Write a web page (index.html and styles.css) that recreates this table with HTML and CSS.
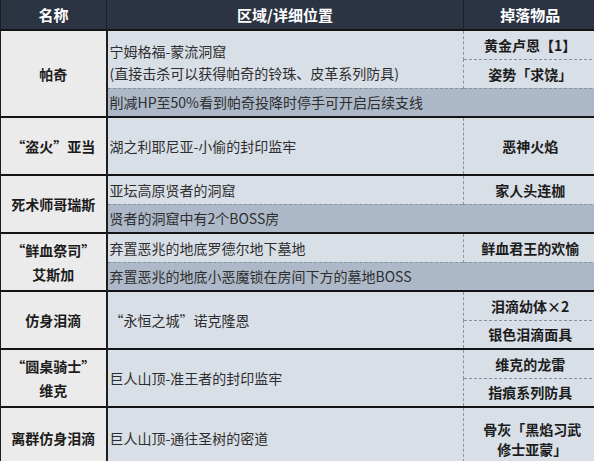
FILE: index.html
```html
<!DOCTYPE html>
<html lang="zh-CN">
<head>
<meta charset="utf-8">
<title>掉落物品</title>
<link rel="stylesheet" href="styles.css">
</head>
<body>
<table class="boss-table">
  <colgroup>
    <col class="c-name">
    <col class="c-loc">
    <col class="c-drop">
  </colgroup>
  <thead>
    <tr class="head">
      <th>名称</th>
      <th>区域/详细位置</th>
      <th>掉落物品</th>
    </tr>
  </thead>
  <tbody class="group">
    <tr class="sub">
      <td class="name" rowspan="3">帕奇</td>
      <td class="loc two" rowspan="2">宁姆格福-蒙流洞窟<br>(直接击杀可以获得帕奇的铃珠、皮革系列防具)</td>
      <td class="drop">黄金卢恩【1】</td>
    </tr>
    <tr class="sub">
      <td class="drop dash-top">姿势「求饶」</td>
    </tr>
    <tr class="sub">
      <td class="note" colspan="2">削减HP至50%看到帕奇投降时停手可开启后续支线</td>
    </tr>
  </tbody>
  <tbody class="group">
    <tr class="full">
      <td class="name">“盗火”亚当</td>
      <td class="loc">湖之利耶尼亚-小偷的封印监牢</td>
      <td class="drop">恶神火焰</td>
    </tr>
  </tbody>
  <tbody class="group">
    <tr class="sub">
      <td class="name" rowspan="2">死术师哥瑞斯</td>
      <td class="loc">亚坛高原贤者的洞窟</td>
      <td class="drop">家人头连枷</td>
    </tr>
    <tr class="sub">
      <td class="note" colspan="2">贤者的洞窟中有2个BOSS房</td>
    </tr>
  </tbody>
  <tbody class="group">
    <tr class="sub">
      <td class="name lines" rowspan="2">“鲜血祭司”<br>艾斯加</td>
      <td class="loc">弃置恶兆的地底罗德尔地下墓地</td>
      <td class="drop">鲜血君王的欢愉</td>
    </tr>
    <tr class="sub">
      <td class="note" colspan="2">弃置恶兆的地底小恶魔锁在房间下方的墓地BOSS</td>
    </tr>
  </tbody>
  <tbody class="group">
    <tr class="sub">
      <td class="name" rowspan="2">仿身泪滴</td>
      <td class="loc" rowspan="2">“永恒之城”诺克隆恩</td>
      <td class="drop">泪滴幼体×2</td>
    </tr>
    <tr class="sub">
      <td class="drop dash-top">银色泪滴面具</td>
    </tr>
  </tbody>
  <tbody class="group">
    <tr class="sub">
      <td class="name lines" rowspan="2">“圆桌骑士”<br>维克</td>
      <td class="loc" rowspan="2">巨人山顶-准王者的封印监牢</td>
      <td class="drop">维克的龙雷</td>
    </tr>
    <tr class="sub">
      <td class="drop dash-top">指痕系列防具</td>
    </tr>
  </tbody>
  <tbody class="group">
    <tr class="last">
      <td class="name">离群仿身泪滴</td>
      <td class="loc">巨人山顶-通往圣树的密道</td>
      <td class="drop wrap">骨灰「黑焰习武<br>修士亚蒙」</td>
    </tr>
  </tbody>
</table>
</body>
</html>
```
FILE: styles.css
```css
html, body {
  margin: 0;
  padding: 0;
  background: #d9dfe7;
  overflow: hidden;
}

body {
  font-family: "Noto Sans CJK SC", "Microsoft YaHei", sans-serif;
  font-size: 14px;
  color: #2b2b2b;
}

.boss-table {
  border-collapse: collapse;
  table-layout: fixed;
  width: 596px;
  border-left: 1px solid #1d1d1d;
}

.c-name { width: 106px; }
.c-loc { width: 357px; }
.c-drop { width: 133px; }

.head th {
  height: 29px;
  padding: 0;
  background: #2c3444;
  color: #ffffff;
  font-size: 15px;
  font-weight: bold;
  text-align: center;
  vertical-align: middle;
  border-left: 1px solid #1b202a;
}

.head th:first-child {
  border-left: none;
}

.group {
  border-top: 2px solid #141414;
}

td {
  padding: 0;
  vertical-align: middle;
  line-height: 20px;
}

.sub {
  height: 29px;
}

.full {
  height: 58px;
}

.last {
  height: 60px;
}

.name {
  background: #ebebeb;
  font-weight: bold;
  text-align: center;
  color: #1c1c1c;
  border-right: 2px solid #1d1d1d;
}

.name.lines {
  line-height: 24px;
}

.loc {
  background: #d9dfe7;
  padding-left: 2px;
  color: #2e2e2e;
  border-right: 1px dashed #8593a3;
}

.loc.two {
  line-height: 22px;
  padding-top: 5px;
}

.drop {
  background: #d9dfe7;
  font-weight: bold;
  text-align: center;
  color: #1c1c1c;
}

.drop.dash-top {
  border-top: 1px dashed #8593a3;
}

.drop.wrap {
  line-height: 20px;
  padding-left: 4px;
  padding-top: 2px;
}

.note {
  background: #adb9c8;
  padding-left: 2px;
  color: #2e2e2e;
  border-top: 1px dashed #8593a3;
}
```
